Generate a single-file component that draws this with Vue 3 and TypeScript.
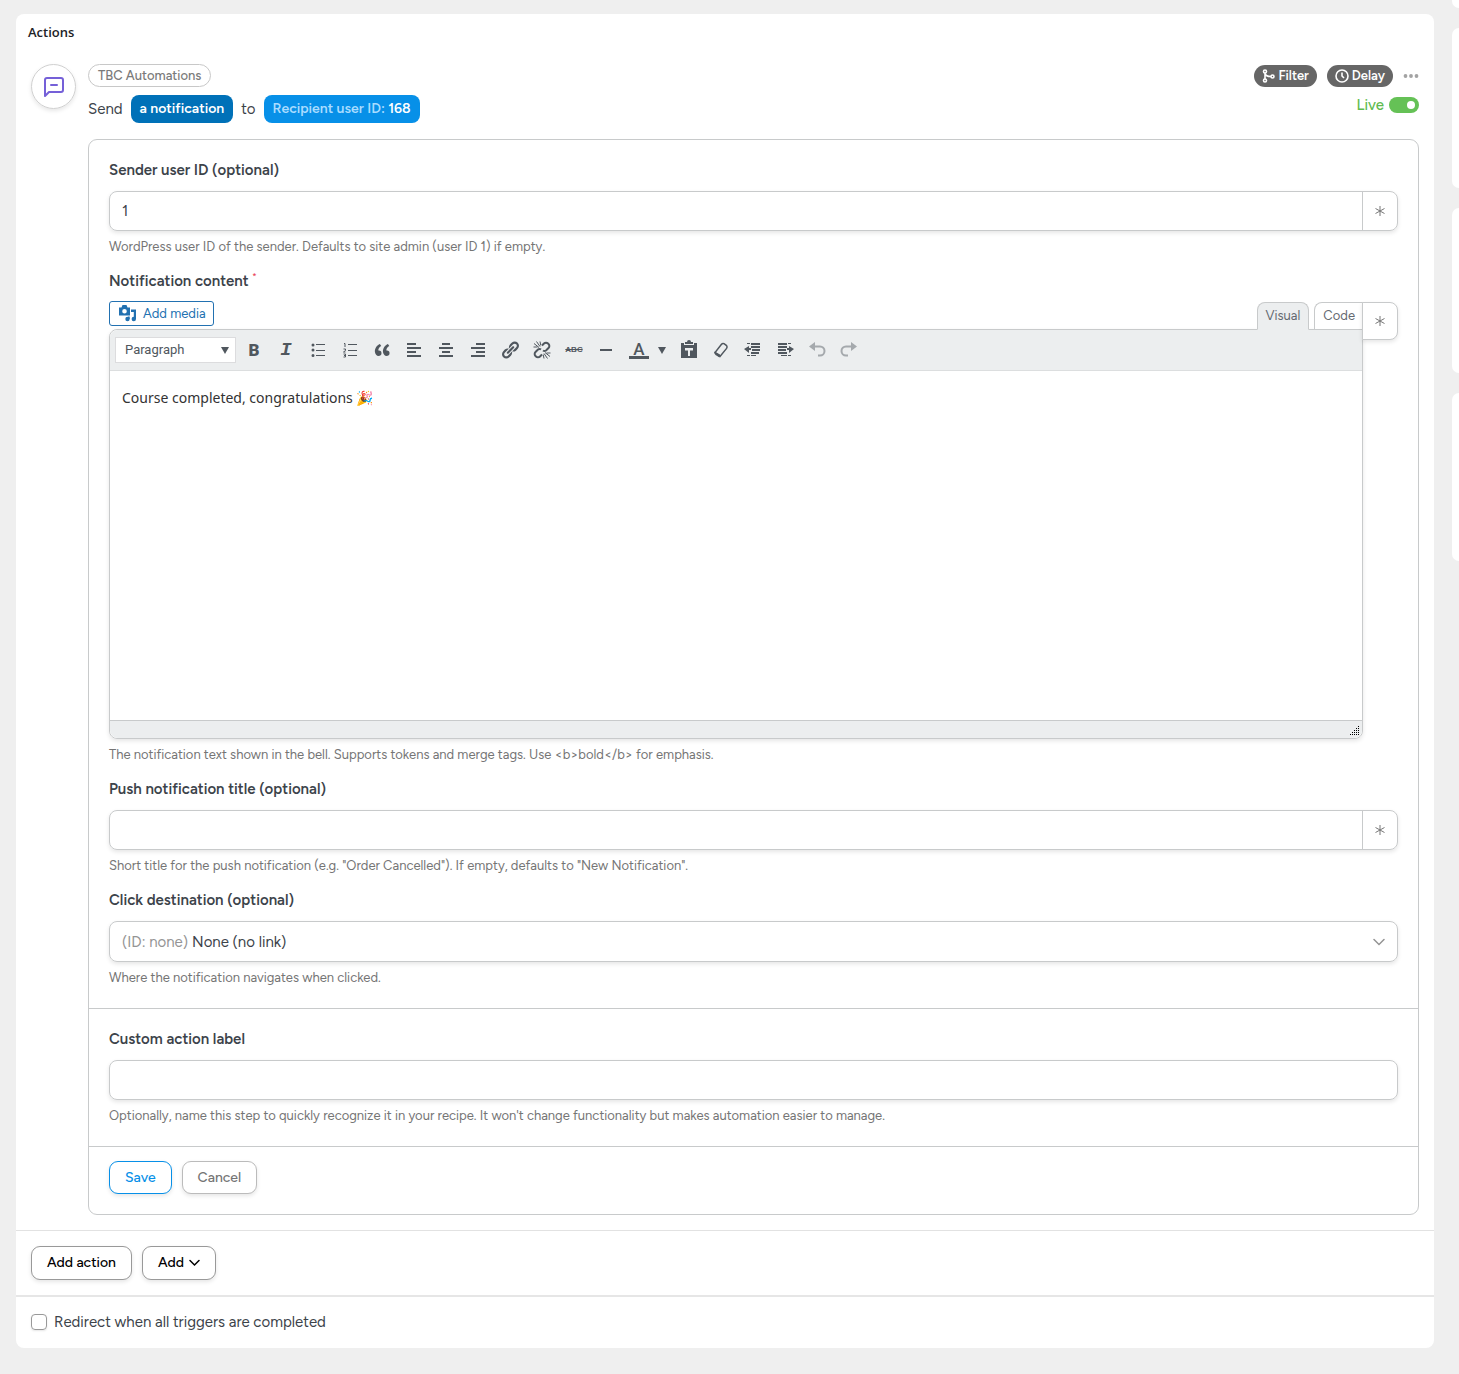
<script setup lang="ts">
import { ref } from 'vue'

interface Tool {
  name: string
  path?: string
  text?: string
  kind?: string
}

const alignTools: Tool[] = [
  { name: 'Bold', text: 'B', kind: 'bold' },
  { name: 'Italic', text: 'I', kind: 'italic' },
  {
    name: 'Bulleted list',
    path: 'M5 6.5a1.5 1.5 0 1 1 0-3 1.5 1.5 0 0 1 0 3zM8 4h9v1H8zM5 11.500a1.500 1.500 0 1 1 0-3 1.500 1.500 0 0 1 0 3zM8 10h9v1H8zM5 17a1.500 1.500 0 1 1 0-3 1.500 1.500 0 0 1 0 3zM8 15h9v1H8z',
  },
  { name: 'Numbered list', kind: 'numbers' },
  {
    name: 'Blockquote',
    path: 'M9.49 13.22c0-.74-.2-1.38-.61-1.9-.62-.78-1.83-.88-2.53-.72-.29-1.65 1.11-3.75 2.92-4.65L7.88 4c-2.73 1.3-5.42 4.28-4.96 8.05C3.21 14.43 4.59 16 6.54 16c.85 0 1.56-.25 2.12-.75s.83-1.18.83-2.03zm8.05 0c0-.74-.2-1.38-.61-1.9-.63-.78-1.83-.88-2.53-.72-.29-1.65 1.11-3.75 2.92-4.65L15.93 4c-2.73 1.3-5.41 4.28-4.95 8.05.29 2.38 1.66 3.95 3.61 3.95.85 0 1.56-.25 2.12-.75s.83-1.18.83-2.03z',
  },
  { name: 'Align left', path: 'M12 5V3H3v2h9zm5 4V7H3v2h14zm-5 4v-2H3v2h9zm5 4v-2H3v2h14z' },
  { name: 'Align center', path: 'M14 5V3H6v2h8zm3 4V7H3v2h14zm-3 4v-2H6v2h8zm3 4v-2H3v2h14z' },
  { name: 'Align right', path: 'M17 5V3H8v2h9zm0 4V7H3v2h14zm0 4v-2H8v2h9zm0 4v-2H3v2h14z' },
  {
    name: 'Insert link',
    path: 'M17.74 2.76c1.68 1.69 1.68 4.41 0 6.1l-1.53 1.52c-1.12 1.12-2.7 1.47-4.14 1.09l2.62-2.61.76-.77.76-.76c.84-.84.84-2.2 0-3.04-.84-.85-2.2-.85-3.04 0l-.77.76-3.38 3.38c-.37-1.44-.02-3.02 1.1-4.14l1.52-1.53c1.69-1.68 4.42-1.68 6.1 0zM8.59 13.43l5.34-5.34c.42-.42.42-1.1 0-1.52-.44-.43-1.13-.39-1.53 0l-5.33 5.34c-.42.42-.42 1.1 0 1.52.44.43 1.13.39 1.52 0zm-.76 2.29l4.14-4.15c.38 1.44.03 3.02-1.09 4.14l-1.52 1.53c-1.69 1.68-4.41 1.68-6.1 0-1.68-1.68-1.68-4.42 0-6.1l1.53-1.52c1.12-1.12 2.7-1.47 4.14-1.1l-4.14 4.15c-.85.84-.85 2.2 0 3.05.84.84 2.2.84 3.04 0z',
  },
  { name: 'Remove link', kind: 'unlink' },
  { name: 'Strikethrough', text: 'ABC', kind: 'strike' },
  { name: 'Horizontal line', path: 'M4 9h12v2H4z' },
]

const formatTools: Tool[] = [
  { name: 'Paste as text', kind: 'paste' },
  { name: 'Clear formatting', kind: 'eraser' },
  { name: 'Decrease indent', kind: 'outdent' },
  { name: 'Increase indent', kind: 'indent' },
  { name: 'Undo', kind: 'undo' },
  { name: 'Redo', kind: 'redo' },
]

const sender = ref('1')
const content = ref('Course completed, congratulations 🎉')
const pushTitle = ref('')
const actionLabel = ref('')
const live = ref(true)
const redirect = ref(false)
</script>

<template>
  <div class="page">
    <main class="card">
      <h2 class="title">Actions</h2>

      <section class="step">
        <div class="avatar">
          <svg width="24" height="24" viewBox="0 0 24 24" fill="none" stroke="#7560d8" stroke-width="2" stroke-linecap="round" stroke-linejoin="round" aria-hidden="true">
            <path d="M3 21V5a2 2 0 0 1 2-2h14a2 2 0 0 1 2 2v10a2 2 0 0 1-2 2H7z" />
            <path d="M9 10h6" />
          </svg>
        </div>

        <div class="body">
          <header class="head">
            <div class="summary">
              <span class="tag">TBC Automations</span>
              <p class="sentence">
                <span>Send</span>
                <button type="button" class="chip dark">a notification</button>
                <span>to</span>
                <button type="button" class="chip"><span class="soft">Recipient user ID:</span> 168</button>
              </p>
            </div>
            <div class="controls">
              <div class="control-row">
                <button type="button" class="pill">
                  <svg width="13" height="14" viewBox="0 0 13 14" fill="none" stroke="#fff" stroke-width="1.600" aria-hidden="true">
                    <circle cx="3" cy="2.500" r="1.500" /><circle cx="3" cy="11.500" r="1.500" /><circle cx="10.500" cy="7.500" r="1.500" />
                    <path d="M3 4v6M3 4.500c.5 2.500 2.500 3 6 3" />
                  </svg>
                  Filter
                </button>
                <button type="button" class="pill">
                  <svg width="14" height="14" viewBox="0 0 14 14" fill="none" stroke="#fff" stroke-width="1.600" aria-hidden="true">
                    <circle cx="7" cy="7" r="6" /><path d="M7 3.500V7l2 2" />
                  </svg>
                  Delay
                </button>
                <button type="button" class="more" aria-label="More options">
                  <svg width="16" height="4" viewBox="0 0 16 4" fill="#a3a3a3" aria-hidden="true">
                    <circle cx="2.500" cy="2" r="1.900" /><circle cx="8" cy="2" r="1.900" /><circle cx="13.500" cy="2" r="1.900" />
                  </svg>
                </button>
              </div>
              <label class="live">Live <input v-model="live" type="checkbox" role="switch" class="switch" /></label>
            </div>
          </header>

          <form class="form" @submit.prevent>
            <div class="section">
              <div class="field">
                <label for="sender">Sender user ID (optional)</label>
                <div class="box">
                  <input id="sender" v-model="sender" type="text" />
                  <button type="button" class="token" aria-label="Insert token">
                    <svg width="12" height="12" viewBox="0 0 12 12" aria-hidden="true"><path d="M6 1v10M1.500 3.500l9 5M10.500 3.500l-9 5" /></svg>
                  </button>
                </div>
                <p class="help">WordPress user ID of the sender. Defaults to site admin (user ID 1) if empty.</p>
              </div>

              <div class="field">
                <label for="content">Notification content <sup class="req">*</sup></label>
                <div class="editor-row">
                  <div class="editor-wrap">
                    <div class="editor-top">
                      <button type="button" class="media">
                        <svg width="18" height="17" viewBox="0 0 18 17" fill="#2271b1" aria-hidden="true">
                          <path fill-rule="evenodd" d="M0 2.500h2.500L3.500 0h4l1 2.500H11V10.500H0zM5.500 4a2.300 2.300 0 1 0 0 4.600 2.300 2.300 0 0 0 0-4.600z" />
                          <path d="M12 4.500h5V14a2.200 2.200 0 1 1-2.200-2.200V7H12z" /><circle cx="8.500" cy="14" r="2.200" /><path d="M9 11.500h1.700v2.500H9z" />
                        </svg>
                        Add media
                      </button>
                      <div class="tabs">
                        <button type="button" class="tab active">Visual</button>
                        <button type="button" class="tab last">Code</button>
                      </div>
                    </div>
                    <div class="editor">
                      <div class="toolbar">
                        <select class="format" aria-label="Text format">
                          <option>Paragraph</option>
                        </select>
                        <button v-for="tool in alignTools" :key="tool.name" type="button" class="tool" :aria-label="tool.name">
                          <span v-if="tool.text" :class="tool.kind">{{ tool.text }}</span>
                          <svg v-else-if="tool.path" width="20" height="20" viewBox="0 0 20 20" aria-hidden="true"><path :d="tool.path" /></svg>
                          <svg v-else-if="tool.kind === 'numbers'" width="20" height="20" viewBox="0 0 20 20" aria-hidden="true">
                            <path d="M8 4h9v1H8zM8 10h9v1H8zM8 15h9v1H8z" />
                            <path class="line thin" d="M4 3.500h1V7M3.500 9h2v1.500l-2 1.500h2M3.500 14h2v3h-2M4 15.500h1.500" />
                          </svg>
                          <svg v-else width="20" height="20" viewBox="0 0 20 20" aria-hidden="true">
                            <g class="line thick">
                              <path d="M10 5.500l2-2a2.800 2.800 0 0 1 4 0l.5.500a2.800 2.800 0 0 1 0 4L14 10.500a2.500 2.500 0 0 1-3 0M10 14.500l-2 2a2.800 2.800 0 0 1-4 0l-.5-.5a2.800 2.800 0 0 1 0-4L6 9.500a2.500 2.500 0 0 1 3 0" />
                            </g>
                            <path class="line" d="M2 3.500l5 4M4.500 1.500l3.500 5M8 1.500l.8 4M1.500 7h4M18 16.500l-5-4M15.500 18.500L12 13.500M12 18.500l-.8-4M18.500 13h-4" />
                          </svg>
                        </button>
                        <button type="button" class="tool color" aria-label="Text color">
                          <span class="color-a">A</span>
                          <svg width="8" height="7" viewBox="0 0 8 7" aria-hidden="true"><path d="M0 0h8L4 7z" /></svg>
                        </button>
                        <button v-for="tool in formatTools" :key="tool.name" type="button" class="tool" :aria-label="tool.name">
                          <svg v-if="tool.kind === 'paste'" width="20" height="20" viewBox="0 0 20 20" aria-hidden="true">
                            <path fill-rule="evenodd" d="M2 3h3v2h10V3h3v15H2zM6 8v2.500h3V16h2v-5.500h3V8z" /><path d="M6 4V2h2a2 2 0 0 1 4 0h2v2z" />
                          </svg>
                          <svg v-else-if="tool.kind === 'eraser'" width="20" height="20" viewBox="0 0 20 20" aria-hidden="true">
                            <path class="line eraser" d="M10.500 4.200Q11.500 3 13 3.600L15.600 5.600Q16.600 7 15.600 8.400L9 16.400L4 12.500z" />
                            <path d="M3.500 11.500L9 14.500L8.500 17.500L4.500 15Q3 13.500 3.500 11.500z" />
                          </svg>
                          <svg v-else-if="tool.kind === 'outdent'" width="20" height="20" viewBox="0 0 20 20" aria-hidden="true">
                            <path d="M8 3h9v2H8zM8 6h9v2H8zM9 9h8v2H9zM8 12h8v2H8zM8 15h5v1H8zM4 3h3v1H4zM4 15h3v1H4zM6 6v2h2v2H6v3L1 9z" />
                          </svg>
                          <svg v-else-if="tool.kind === 'indent'" width="20" height="20" viewBox="0 0 20 20" aria-hidden="true">
                            <path d="M3 3h9v2H3zM3 6h9v2H3zM3 9h8v2H3zM3 12h9v2H3zM6 15h6v1H6zM13 3h3v1h-3zM13 15h3v1h-3zM14 6v2h-2v2h2v3l5-4z" />
                          </svg>
                          <svg v-else-if="tool.kind === 'undo'" class="faded" width="20" height="20" viewBox="0 0 20 20" aria-hidden="true">
                            <path d="M2 6.500L8 2v9z" /><path class="line thick" d="M7 6.500h6a4.500 4.500 0 0 1 0 9h-2" />
                          </svg>
                          <svg v-else class="faded" width="20" height="20" viewBox="0 0 20 20" aria-hidden="true">
                            <path d="M18 6.500L12 2v9z" /><path class="line thick" d="M13 6.500H7a4.500 4.500 0 0 0 0 9h2" />
                          </svg>
                        </button>
                      </div>
                      <textarea id="content" v-model="content" class="content"></textarea>
                      <div class="status">
                        <svg width="10" height="10" viewBox="0 0 10 10" aria-hidden="true">
                          <path d="M8 0h1v1H8zM6 2h1v1H6zM8 2h1v1H8zM4 4h1v1H4zM6 4h1v1H6zM8 4h1v1H8zM2 6h1v1H2zM4 6h1v1H4zM6 6h1v1H6zM8 6h1v1H8zM0 8h1v1H0zM2 8h1v1H2zM4 8h1v1H4zM6 8h1v1H6zM8 8h1v1H8z" />
                        </svg>
                      </div>
                    </div>
                  </div>
                  <button type="button" class="token boxed" aria-label="Insert token">
                    <svg width="12" height="12" viewBox="0 0 12 12" aria-hidden="true"><path d="M6 1v10M1.500 3.500l9 5M10.500 3.500l-9 5" /></svg>
                  </button>
                </div>
                <p class="help">The notification text shown in the bell. Supports tokens and merge tags. Use &lt;b&gt;bold&lt;/b&gt; for emphasis.</p>
              </div>

              <div class="field">
                <label for="push">Push notification title (optional)</label>
                <div class="box">
                  <input id="push" v-model="pushTitle" type="text" />
                  <button type="button" class="token" aria-label="Insert token">
                    <svg width="12" height="12" viewBox="0 0 12 12" aria-hidden="true"><path d="M6 1v10M1.500 3.500l9 5M10.500 3.500l-9 5" /></svg>
                  </button>
                </div>
                <p class="help">Short title for the push notification (e.g. "Order Cancelled"). If empty, defaults to "New Notification".</p>
              </div>

              <div class="field">
                <label for="destination">Click destination (optional)</label>
                <div class="box choice">
                  <span class="prefix">(ID: none)</span>
                  <select id="destination">
                    <option>None (no link)</option>
                  </select>
                  <svg width="12" height="8" viewBox="0 0 12 8" fill="none" stroke="#949494" stroke-width="1.500" stroke-linecap="round" aria-hidden="true"><path d="M1 1.500l5 5 5-5" /></svg>
                </div>
                <p class="help">Where the notification navigates when clicked.</p>
              </div>
            </div>

            <div class="section">
              <div class="field">
                <label for="custom">Custom action label</label>
                <div class="box"><input id="custom" v-model="actionLabel" type="text" /></div>
                <p class="help">Optionally, name this step to quickly recognize it in your recipe. It won't change functionality but makes automation easier to manage.</p>
              </div>
            </div>

            <div class="form-actions">
              <button type="submit" class="btn save">Save</button>
              <button type="button" class="btn cancel">Cancel</button>
            </div>
          </form>
        </div>
      </section>

      <div class="add-row">
        <button type="button" class="btn add">Add action</button>
        <button type="button" class="btn add">
          Add
          <svg width="11" height="8" viewBox="0 0 11 8" fill="none" stroke="#000" stroke-width="1.500" stroke-linecap="round" aria-hidden="true"><path d="M1 1.500l4.500 4.500L10 1.500" /></svg>
        </button>
      </div>

      <label class="redirect">
        <input v-model="redirect" type="checkbox" />
        Redirect when all triggers are completed
      </label>
    </main>

    <aside class="side" aria-hidden="true">
      <div class="panel first"></div>
      <div class="panel"></div>
      <div class="panel"></div>
      <div class="panel"></div>
    </aside>
  </div>
</template>

<style>
body {
  background: #efefef;
}
</style>

<style scoped>
* {
  box-sizing: border-box;
}
.page {
  display: grid;
  grid-template-columns: minmax(0, 1fr) 7px;
  gap: 18px;
  padding: 0 0 26px 16px;
  color: #3c434a;
  font: 15px/20px Figtree, Inter, sans-serif;
}
button,
input,
select,
textarea {
  margin: 0;
  font: inherit;
  color: inherit;
}
button {
  cursor: pointer;
}
.card {
  margin-top: 14px;
  background: #fff;
  border-radius: 8px;
}
.title {
  margin: 0;
  padding: 8px 12px;
  font: 600 13px/20px "Open Sans", sans-serif;
  color: #1d2327;
}
.step {
  display: flex;
  gap: 12px;
  padding: 14px 15px 15px;
}
.avatar {
  display: flex;
  align-items: center;
  justify-content: center;
  flex: none;
  width: 45px;
  height: 45px;
  border: 1px solid #d0d0d0;
  border-radius: 50%;
  box-shadow: 0 2px 4px #0000001a;
}
.body {
  flex: 1;
  min-width: 0;
}
.head {
  display: flex;
  justify-content: space-between;
}
.tag {
  display: inline-block;
  height: 23px;
  padding: 0 9px;
  border: 1px solid #c8c8c8;
  border-radius: 12px;
  font-size: 13px;
  font-weight: 500;
  line-height: 21px;
  color: #7a7a7a;
}
.summary {
  display: flex;
  flex-direction: column;
  align-items: flex-start;
  gap: 8px;
}
.sentence {
  display: flex;
  align-items: center;
  gap: 8px;
  margin: 0;
}
.chip {
  height: 28px;
  padding: 0 9px;
  border: 0;
  border-radius: 8px;
  background: #0790e8;
  color: #fff;
  font-size: 14px;
  font-weight: 600;
}
.dark {
  background: #0071b8;
}
.soft {
  color: #a9dcff;
}
.controls {
  display: flex;
  flex-direction: column;
  align-items: flex-end;
  gap: 8px;
  padding-top: 1px;
}
.control-row {
  display: flex;
  align-items: center;
  gap: 10px;
}
.pill {
  display: flex;
  align-items: center;
  gap: 3px;
  height: 22px;
  padding: 0 8px;
  border: 0;
  border-radius: 11px;
  background: #666;
  color: #fff;
  font-size: 13px;
  font-weight: 600;
}
.more {
  display: flex;
  padding: 0;
  border: 0;
  background: none;
}
.live {
  display: flex;
  align-items: center;
  gap: 5px;
  color: #5fbb50;
  font-weight: 500;
}
.switch {
  appearance: none;
  width: 30px;
  height: 16px;
  padding: 4px;
  border-radius: 8px;
  background: #b5b5b5;
}
.switch::after {
  content: "";
  display: block;
  width: 8px;
  height: 8px;
  border-radius: 50%;
  background: #fff;
}
.switch:checked {
  background: #65c156;
}
.switch:checked::after {
  margin-left: auto;
}
.form {
  margin-top: 16px;
  border: 1px solid #c8cacb;
  border-radius: 9px;
}
.section {
  display: flex;
  flex-direction: column;
  gap: 15px;
  padding: 20px 20px 21px;
  border-bottom: 1px solid #c8cacb;
}
.field > label {
  display: block;
  height: 20px;
  margin-bottom: 11px;
  font-weight: 600;
}
.req {
  font-size: 9px;
  line-height: 1;
  font-weight: 400;
  color: #e8384f;
}
.box {
  display: flex;
  height: 40px;
  border: 1px solid #c8cacb;
  border-radius: 8px;
  box-shadow: 0 2px 4px #0000001a;
}
.box > input {
  flex: 1;
  min-width: 0;
  padding: 0 12px;
  border: 0;
  border-radius: 8px;
  background: none;
}
.token {
  display: flex;
  align-items: center;
  justify-content: center;
  flex: none;
  width: 35px;
  padding: 0;
  border: 0;
  border-left: 1px solid #c8cacb;
  background: none;
}
.token svg {
  fill: none;
  stroke: #777;
}
.boxed {
  width: 36px;
  height: 38px;
  margin-top: 1px;
  margin-left: -1px;
  border: 1px solid #c8cacb;
  border-radius: 0 8px 8px 0;
  background: #fff;
  box-shadow: 0 2px 4px #0000001a;
}
.help {
  margin: 7px 0 0;
  font-size: 13px;
  line-height: 18px;
  color: #757575;
}
.editor-row {
  display: flex;
  align-items: flex-start;
  margin-top: -1px;
}
.editor-wrap {
  flex: 1;
  min-width: 0;
}
.editor-top {
  display: flex;
  justify-content: space-between;
  height: 28px;
}
.media {
  display: flex;
  align-items: center;
  gap: 6px;
  height: 25px;
  padding: 0 7px 0 9px;
  border: 1px solid #2271b1;
  border-radius: 3px;
  background: #fff;
  color: #2271b1;
  font-size: 13px;
}
.tabs {
  display: flex;
  gap: 5px;
  align-self: flex-end;
}
.tab {
  height: 28px;
  margin-bottom: -1px;
  padding: 0 8px;
  border: 1px solid #c8cacb;
  border-radius: 8px 8px 0 0;
  background: #fff;
  color: #646970;
  font-size: 13px;
}
.last {
  border-top-right-radius: 0;
  border-right: 0;
}
.active {
  position: relative;
  border-bottom-color: #eceeef;
  background: #eceeef;
}
.editor {
  border: 1px solid #c8cacb;
  border-radius: 8px 0 8px 8px;
  box-shadow: 0 2px 4px #0000001a;
}
.toolbar {
  display: flex;
  align-items: center;
  height: 41px;
  padding-left: 5px;
  border-bottom: 1px solid #dcdedf;
  border-radius: 8px 0 0 0;
  background: #eceeef;
}
.format {
  appearance: none;
  width: 121px;
  height: 26px;
  margin-right: 2px;
  padding: 0 9px;
  border: 1px solid #dcdcde;
  border-radius: 0;
  background: #fff url("data:image/svg+xml,%3Csvg xmlns='http://www.w3.org/2000/svg' width='8' height='7'%3E%3Cpath d='M0 0h8L4 7z' fill='%2350575e'/%3E%3C/svg%3E") no-repeat right 6px center;
  color: #50575e;
  font: 13px/24px Roboto, sans-serif;
}
.tool {
  display: flex;
  align-items: center;
  justify-content: center;
  width: 32px;
  height: 30px;
  padding: 0;
  border: 0;
  background: none;
  color: #50575e;
}
.tool svg {
  fill: #50575e;
}
.tool .line {
  fill: none;
  stroke: #50575e;
}
.tool .thick {
  stroke-width: 2;
}
.tool .eraser {
  stroke-width: 1.5;
}
.bold {
  font: 900 17px/20px Roboto, sans-serif;
}
.italic {
  font: italic 700 19px/20px "Liberation Mono", monospace;
}
.strike {
  font: 700 8px/10px "Liberation Sans", sans-serif;
  text-decoration: line-through;
}
.color {
  gap: 9px;
  width: 51px;
}
.color-a {
  width: 20px;
  height: 18px;
  border-bottom: 3px solid #50575e;
  font: 500 17px/16px Roboto, sans-serif;
}
.tool .faded {
  opacity: 0.45;
}
.content {
  display: block;
  width: 100%;
  height: 349px;
  padding: 15px 12px;
  border: 0;
  resize: none;
  background: #fff;
  color: #333;
  font: 14px/24px "Noto Sans", sans-serif;
}
.status {
  display: flex;
  align-items: flex-end;
  justify-content: flex-end;
  height: 18px;
  padding: 0 2px 2px;
  border-top: 1px solid #c8cacb;
  border-radius: 0 0 8px 8px;
  background: #eceeef;
}
.choice {
  align-items: center;
  gap: 4px;
  height: 41px;
  padding: 0 12px;
}
.prefix {
  color: #949494;
}
.choice select {
  appearance: none;
  flex: 1;
  height: 30px;
  padding: 0;
  border: 0;
  background: none;
}
.form-actions {
  display: flex;
  gap: 10px;
  padding: 14px 20px 20px;
}
.btn {
  display: flex;
  align-items: center;
  gap: 5px;
  height: 33px;
  padding: 0 15px;
  border: 1px solid;
  border-radius: 9px;
  background: #fff;
  font-size: 14px;
  font-weight: 500;
  box-shadow: 0 2px 4px #0000001a;
}
.save {
  border-color: #0790e8;
  color: #0790e8;
}
.cancel {
  border-color: #bbb;
  color: #757575;
}
.add {
  height: 34px;
  border-color: #999;
  color: #000;
}
.add-row {
  display: flex;
  gap: 10px;
  padding: 15px;
  border-top: 1px solid #e2e2e2;
}
.redirect {
  display: flex;
  align-items: center;
  gap: 7px;
  padding: 15px 15px 16px;
  border-top: 2px solid #e6e6e6;
}
.redirect input {
  appearance: none;
  width: 16px;
  height: 16px;
  border: 1px solid #999;
  border-radius: 4px;
  box-shadow: 0 1px 2px #0000001a;
}
.redirect input:checked {
  background: #0790e8;
}
.side {
  display: grid;
  grid-template-rows: 8px 160px 165px 168px;
  align-content: start;
  gap: 20px;
}
.panel {
  border-radius: 8px 0 0 8px;
  background: #fff;
}
.first {
  border-radius: 0 0 0 8px;
}
</style>
